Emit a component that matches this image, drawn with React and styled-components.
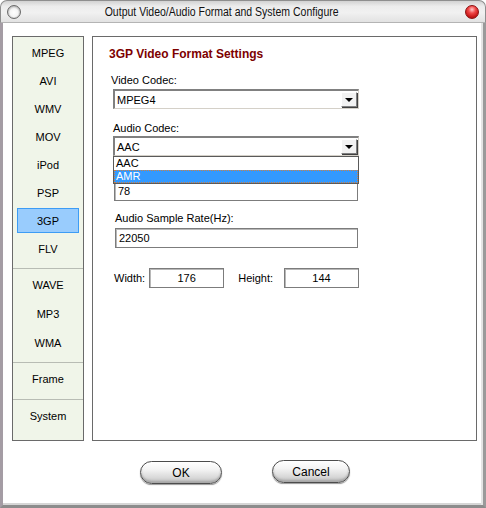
import styled, { createGlobalStyle } from "styled-components";

const Global = createGlobalStyle`
  html, body {
    margin: 0;
    padding: 0;
    background: #fff;
  }
  body {
    font-family: "Liberation Sans", Arial, sans-serif;
    font-size: 11px;
    color: #000;
  }
`;

const Window = styled.div`
  width: 486px;
  height: 508px;
  display: flex;
  flex-direction: column;
  box-sizing: border-box;
  background: #fff;
`;

const TitleBar = styled.div`
  height: 23px;
  box-sizing: border-box;
  display: flex;
  align-items: center;
  justify-content: space-between;
  padding: 0 6px 0 6px;
  border: 1px solid #8e8e8e;
  border-bottom: 1px solid #b4b4b4;
  border-radius: 7px 7px 0 0;
  background: linear-gradient(#d2d2d2 0%, #ececec 25%, #f1f1f1 55%, #e2e2e2 100%);
`;

const Light = styled.span`
  width: 14px;
  height: 14px;
  border-radius: 50%;
  box-sizing: border-box;
  flex: none;
  border: 1px solid ${(p) => (p.$red ? "#8a1010" : "#6a6a6a")};
  background: ${(p) =>
    p.$red
      ? "radial-gradient(circle at 50% 30%, #ffc8c8 0%, #f04848 35%, #c81818 70%, #901010 100%)"
      : "radial-gradient(circle at 50% 55%, #ffffff 0%, #f4f4f4 45%, #a8a8a8 80%, #7a7a7a 100%)"};
`;

const Title = styled.span`
  display: inline-block;
  font-size: 12px;
  color: #111;
  white-space: nowrap;
  transform: scaleX(0.875);
  margin: 0 21px 0 -21px;
`;

const Body = styled.div`
  flex: 1;
  display: flex;
  flex-direction: column;
  padding: 13px 6px 0 9px;
  border-left: 3px solid #a49ca4;
  border-right: 3px solid #9a9a9a;
  border-bottom: 3px solid #8c8c8c;
  box-shadow: inset -2px 0 #e4e4e4, inset 0 -2px #d6d6d6;
`;

const Main = styled.div`
  height: 405px;
  display: flex;
  gap: 8px;
`;

const Sidebar = styled.div`
  width: 72px;
  box-sizing: border-box;
  border: 1px solid #6a6a6a;
  background: #f0f5e9;
  display: flex;
  flex-direction: column;
`;

const Group = styled.div`
  display: flex;
  flex-direction: column;
  align-items: center;
  height: ${(p) => p.$h || "auto"};
  flex: ${(p) => (p.$grow ? 1 : "none")};
  padding-top: ${(p) => p.$pt || 0}px;
  box-sizing: border-box;
  border-bottom: ${(p) => (p.$last ? "none" : "1px solid #b8bcb4")};
`;

const NavItem = styled.div`
  width: 62px;
  height: ${(p) => p.$h || 28}px;
  display: flex;
  align-items: center;
  justify-content: center;
  box-sizing: border-box;
  ${(p) =>
    p.$active &&
    `
    height: 25px;
    margin: 1px 0 2px;
    background: #99ccfd;
    border: 1px solid #3d9cf5;
  `}
`;

const Panel = styled.div`
  flex: 1;
  box-sizing: border-box;
  border: 1px solid #6a6a6a;
  background: #fff;
  padding: 10px 0 0 20px;
  display: flex;
  flex-direction: column;
  align-items: flex-start;
`;

const Heading = styled.div`
  font-weight: bold;
  font-size: 12px;
  line-height: 14px;
  color: #7d0000;
  margin-left: -4px;
`;

const Label = styled.div`
  line-height: 14px;
  margin-top: ${(p) => p.$mt || 0}px;
  margin-left: ${(p) => p.$ml || 0}px;
  white-space: nowrap;
`;

const ComboWrap = styled.div`
  position: relative;
  margin-top: ${(p) => p.$mt || 0}px;
`;

const Combo = styled.div`
  width: 246px;
  height: 20px;
  box-sizing: border-box;
  border-top: 2px solid #808080;
  border-left: 2px solid #808080;
  border-right: 1px solid #d4d0c8;
  border-bottom: 1px solid #d4d0c8;
  display: flex;
  align-items: center;
  background: #fff;
  padding-left: 2px;
`;

const ComboText = styled.span`
  flex: 1;
`;

const ArrowBtn = styled.span`
  width: 16px;
  height: 15px;
  margin-right: 1px;
  box-sizing: border-box;
  background: #f2f2f2;
  border-top: 1px solid #fff;
  border-left: 1px solid #fff;
  border-right: 1px solid #808080;
  border-bottom: 1px solid #808080;
  box-shadow: 1px 1px 0 #404040;
  display: flex;
  align-items: center;
  justify-content: center;
`;

const Tri = styled.span`
  width: 0;
  height: 0;
  border-left: 4px solid transparent;
  border-right: 4px solid transparent;
  border-top: 4px solid #000;
`;

const ListBox = styled.div`
  position: absolute;
  left: 0;
  top: 20px;
  width: 246px;
  box-sizing: border-box;
  border: 1px solid #5a5a5a;
  background: #fff;
  z-index: 2;
`;

const ListItem = styled.div`
  height: 13px;
  box-sizing: border-box;
  color: ${(p) => (p.$sel ? "#fff" : "#000")};
  background: ${(p) => (p.$sel ? "#3399ff" : "transparent")};
  border: ${(p) => (p.$sel ? "1px dotted #d08040" : "none")};
  line-height: ${(p) => (p.$sel ? 11 : 13)}px;
  padding-left: ${(p) => (p.$sel ? 1 : 2)}px;
`;

const Field = styled.div`
  width: ${(p) => p.$w || 243}px;
  height: 20px;
  box-sizing: border-box;
  border: 1px solid #7c7c7c;
  box-shadow: inset 1px 1px 0 #b8b8b8;
  background: #fff;
  display: flex;
  align-items: center;
  justify-content: ${(p) => (p.$center ? "center" : "flex-start")};
  padding-left: ${(p) => (p.$center ? 0 : 3)}px;
  margin-top: ${(p) => p.$mt || 0}px;
  margin-left: ${(p) => p.$ml || 0}px;
`;

const SizeRow = styled.div`
  display: flex;
  align-items: center;
  margin-top: 20px;
`;

const Buttons = styled.div`
  display: flex;
  gap: 50px;
  margin-top: 19px;
  padding-left: 128px;
  align-items: flex-start;
`;

const PillButton = styled.button`
  width: ${(p) => p.$w}px;
  height: 23px;
  margin-top: ${(p) => p.$mt || 0}px;
  border-radius: 12px;
  border: 1px solid #4c4c4c;
  background: linear-gradient(#ffffff 0%, #f4f4f4 35%, #d8d8d8 75%, #bcbcbc 100%);
  box-shadow: inset 0 1px 0 #fff, inset 0 -2px 2px #a8a8a8, 0 1px 1px #999;
  font-family: "Liberation Sans", sans-serif;
  font-size: 12px;
  color: #000;
  padding: 0;
`;

const groups = [
  { h: "232px", pt: 2, items: ["MPEG", "AVI", "WMV", "MOV", "iPod", "PSP", "3GP", "FLV"], ih: 28 },
  { h: "94px", pt: 1, items: ["WAVE", "MP3", "WMA"], ih: 29 },
  { h: "37px", pt: 0, items: ["Frame"], ih: 32 },
  { grow: true, pt: 0, items: ["System"], ih: 32, last: true },
];

export default function App() {
  return (
    <>
      <Global />
      <Window>
        <TitleBar>
          <Light />
          <Title>Output Video/Audio Format and System Configure</Title>
          <Light $red />
        </TitleBar>
        <Body>
          <Main>
            <Sidebar>
              {groups.map((g, i) => (
                <Group key={i} $h={g.h} $pt={g.pt} $grow={g.grow} $last={g.last}>
                  {g.items.map((it) => (
                    <NavItem key={it} $h={g.ih} $active={it === "3GP"}>
                      {it}
                    </NavItem>
                  ))}
                </Group>
              ))}
            </Sidebar>
            <Panel>
              <Heading>3GP Video Format Settings</Heading>
              <Label $mt={12} $ml={-2}>Video Codec:</Label>
              <ComboWrap $mt={2}>
                <Combo>
                  <ComboText>MPEG4</ComboText>
                  <ArrowBtn>
                    <Tri />
                  </ArrowBtn>
                </Combo>
              </ComboWrap>
              <Label $mt={12}>Audio Codec:</Label>
              <ComboWrap $mt={1}>
                <Combo>
                  <ComboText>AAC</ComboText>
                  <ArrowBtn>
                    <Tri />
                  </ArrowBtn>
                </Combo>
                <ListBox>
                  <ListItem>AAC</ListItem>
                  <ListItem $sel>AMR</ListItem>
                </ListBox>
              </ComboWrap>
              <Field $mt={25} $ml={1} $w={244}>78</Field>
              <Label $mt={10} $ml={2}>Audio Sample Rate(Hz):</Label>
              <Field $mt={3} $ml={2}>22050</Field>
              <SizeRow>
                <Label $ml={1}>Width:</Label>
                <Field $w={75} $ml={4} $center>176</Field>
                <Label $ml={14}>Height:</Label>
                <Field $w={75} $ml={11} $center>144</Field>
              </SizeRow>
            </Panel>
          </Main>
          <Buttons>
            <PillButton $w={82} $mt={1}>OK</PillButton>
            <PillButton $w={78}>Cancel</PillButton>
          </Buttons>
        </Body>
      </Window>
    </>
  );
}
